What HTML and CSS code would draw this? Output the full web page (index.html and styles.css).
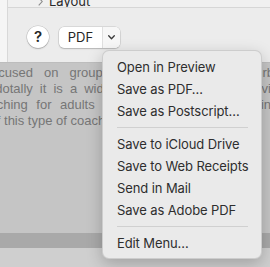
FILE: index.html
```html
<!DOCTYPE html>
<html lang="en">
<head>
    <meta charset="UTF-8">
    <meta name="viewport" content="width=device-width, initial-scale=1.0">
    <title>Print - PDF menu</title>
    <link rel="stylesheet" href="styles.css">
</head>
<body>
    <div class="window">
        <div class="top">
            <div class="sidebar"></div>
            <div class="panel">
                <div class="outline-row">
                    <span class="outline-item">
                        <svg class="disclosure" width="5" height="9" viewBox="0 0 5 9"><polyline points="0.7,0.7 4.2,4.5 0.7,8.3" fill="none" stroke="#8a8a8a" stroke-width="1.1"/></svg>
                        Layout
                    </span>
                </div>
                <div class="toolbar">
                    <button class="help-btn">?</button>
                    <div class="pdf-btn">
                        <span class="pdf-label">PDF</span>
                        <span class="pdf-arrow">
                            <svg width="7" height="5" viewBox="0 0 7 5"><polyline points="0.7,0.8 3.5,3.7 6.3,0.8" fill="none" stroke="#3a3a3a" stroke-width="1.3" stroke-linecap="round" stroke-linejoin="round"/></svg>
                        </span>
                    </div>
                </div>
            </div>
        </div>

        <div class="page">
            <div class="doc">
                <div class="line l1">is focused on group coaching in their suburb</div>
                <div class="line">anecdotally it is a widely used method, mostly via</div>
                <div class="line l3">in teaching for adults and children, who meet in</div>
                <div class="line l4">use of this type of coaching.</div>
            </div>
        </div>
        <div class="band"></div>
        <div class="below"></div>
    </div>

    <!-- PDF dropdown, drawn over the sheet -->
    <ul class="menu">
        <li class="menu-item">Open in Preview</li>
        <li class="menu-item">Save as PDF…</li>
        <li class="menu-item">Save as Postscript…</li>
        <li class="menu-sep"></li>
        <li class="menu-item">Save to iCloud Drive</li>
        <li class="menu-item">Save to Web Receipts</li>
        <li class="menu-item">Send in Mail</li>
        <li class="menu-item">Save as Adobe PDF</li>
        <li class="menu-sep"></li>
        <li class="menu-item">Edit Menu…</li>
    </ul>
</body>
</html>
```

FILE: styles.css
```css
html, body {
    margin: 0;
    padding: 0;
}
body {
    width: 270px;
    height: 267px;
    overflow: hidden;
    position: relative;
    font-family: Inter, "Noto Sans", sans-serif;
    background: #ececec;
}
.window {
    display: flex;
    flex-direction: column;
    height: 267px;
}
.top {
    display: flex;
    height: 62px;
    border-bottom: 1px solid #bdbdbd;
    background: #ececec;
}
.sidebar {
    width: 7px;
    background: #f5f5f5;
    border-right: 1px solid #d8d8d8;
}
.panel {
    flex: 1;
    display: flex;
    flex-direction: column;
}
.outline-row {
    height: 7px;
    overflow: hidden;
    background: #f0f0f0;
    border-bottom: 1px solid #d6d6d6;
}
.outline-item {
    display: flex;
    align-items: center;
    gap: 6px;
    margin-top: -7px;
    padding-left: 30px;
    height: 16px;
    font-size: 13px;
    color: #2a2a2a;
}
.toolbar {
    display: flex;
    align-items: center;
    gap: 10px;
    padding: 18px 0 0 19px;
}
.help-btn {
    width: 22px;
    height: 22px;
    padding: 0;
    border: none;
    border-radius: 50%;
    background: #fff;
    box-shadow: 0 0 0 0.5px rgba(0, 0, 0, 0.18), 0 1px 1.5px rgba(0, 0, 0, 0.18);
    font-family: Inter, sans-serif;
    font-size: 15px;
    font-weight: 600;
    color: #262626;
    line-height: 22px;
}
.pdf-btn {
    display: flex;
    height: 21px;
    border-radius: 5px;
    background: #fff;
    box-shadow: 0 0 0 0.5px rgba(0, 0, 0, 0.16), 0 1px 1.5px rgba(0, 0, 0, 0.16);
}
.pdf-label {
    width: 43px;
    text-align: center;
    font-size: 13px;
    line-height: 21px;
    color: #262626;
    border-right: 1px solid #e0e0e0;
}
.pdf-arrow {
    width: 17px;
    display: flex;
    align-items: center;
    justify-content: center;
    background: #f7f7f7;
    border-radius: 0 5px 5px 0;
}
.page {
    height: 170px;
    overflow: hidden;
    background: #c5c5c5;
    padding-top: 2px;
    box-sizing: border-box;
}
.doc {
    margin-left: -33px;
    font-family: "Liberation Sans", Arial, sans-serif;
    font-size: 13px;
    line-height: 16px;
    color: #767676;
}
.line {
    width: 311px;
    white-space: nowrap;
    text-align: justify;
    text-align-last: justify;
}
.l1 {
    width: 307px;
}
.l3 {
    margin-left: -7px;
}
.l4 {
    margin-left: -2px;
    text-align-last: left;
}
.band {
    height: 15px;
    background: #a9a9a9;
}
.below {
    flex: 1;
    background: #cfcfcf;
}
.menu {
    position: absolute;
    left: 102px;
    top: 50px;
    width: 160px;
    box-sizing: border-box;
    margin: 0;
    padding: 5px 0 4px;
    list-style: none;
    background: #eaeaea;
    border: 1px solid rgba(0, 0, 0, 0.12);
    border-radius: 7px;
    box-shadow: 0 5px 16px rgba(0, 0, 0, 0.22);
}
.menu-item {
    height: 22px;
    line-height: 22px;
    padding-left: 14px;
    font-size: 13px;
    letter-spacing: -0.1px;
    color: #2e2e2e;
    white-space: nowrap;
}
.menu-sep {
    height: 1px;
    margin: 5px 13px 5px 14px;
    background: #d0d0d0;
}
```
